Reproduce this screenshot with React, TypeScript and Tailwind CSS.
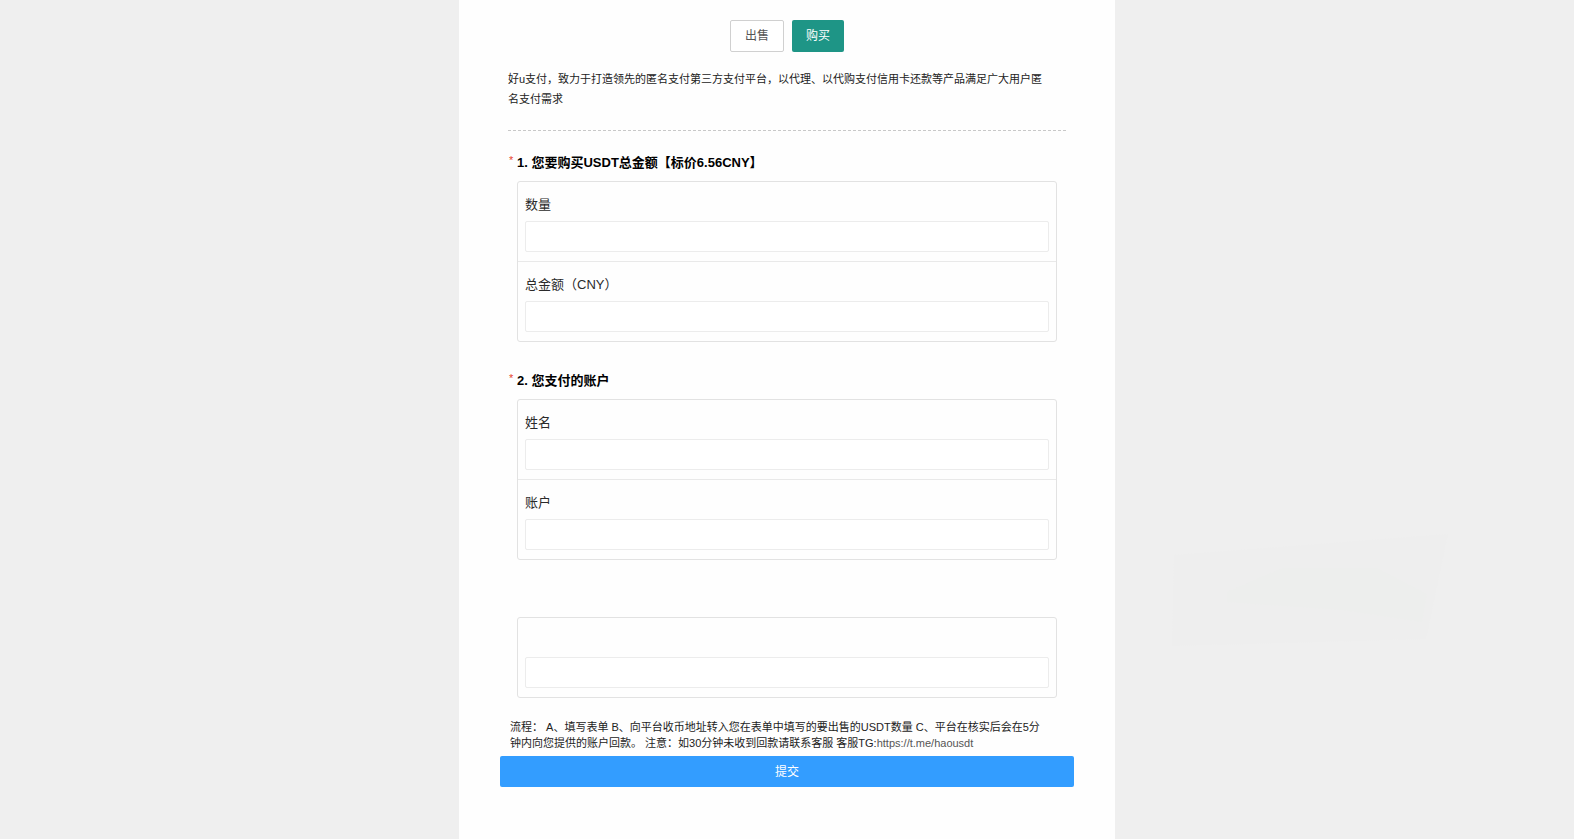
import { clsx } from 'clsx'

interface FieldType {
  id: string
  label?: string
}

interface SectionType {
  id: string
  title?: string
  fields: FieldType[]
}

const sections: SectionType[] = [
  {
    id: 'amount',
    title: '1. 您要购买USDT总金额【标价6.56CNY】',
    fields: [
      { id: 'quantity', label: '数量' },
      { id: 'total', label: '总金额（CNY）' },
    ],
  },
  {
    id: 'account',
    title: '2. 您支付的账户',
    fields: [
      { id: 'name', label: '姓名' },
      { id: 'account-no', label: '账户' },
    ],
  },
  { id: 'extra', fields: [{ id: 'remark' }] },
]

function Field({ field, first }: { field: FieldType; first: boolean }) {
  return (
    <div
      className={clsx(
        'flex flex-col px-[7px] pt-2 pb-[9px]',
        !first && 'border-t border-[#e9e9e9]'
      )}
    >
      <label htmlFor={field.id} className="h-[31px] text-[13px] leading-[30px] text-[#2a2a2a]">
        {field.label}
      </label>
      <input
        id={field.id}
        name={field.id}
        type="text"
        aria-label={field.label ?? '备注'}
        className="h-[31px] w-full rounded-xs border border-[#ececec] bg-white px-2 text-[13px] outline-none focus:border-[#339dff]"
      />
    </div>
  )
}

function Section({ section }: { section: SectionType }) {
  return (
    <section>
      <h2 className="flex h-5 text-[13px] leading-[22px] font-bold text-black">
        {section.title && (
          <>
            <span className="w-[9px] shrink-0 pl-px text-[11px] leading-4 font-normal text-[#e8432e]">
              *
            </span>
            {section.title}
          </>
        )}
      </h2>
      <div className="mx-[9px] mt-[9px] rounded-[3px] border border-[#e2e2e2]">
        {section.fields.map((field, i) => (
          <Field key={field.id} field={field} first={i === 0} />
        ))}
      </div>
    </section>
  )
}

// faint banner shape sitting on the page background
function Backdrop() {
  return (
    <svg
      aria-hidden="true"
      viewBox="0 0 276 112"
      className="pointer-events-none absolute top-[534px] left-[calc(50%+385px)] h-28 w-[276px]"
    >
      <path d="M2 21 L276 0 L254 105 L0 112 Z" fill="#eeeeee" />
      <path d="M55 58 L110 34 L205 34 L255 60 L250 88 L170 76 L55 68 Z" fill="#edeeed" />
    </svg>
  )
}

export default function App() {
  return (
    <div className="relative min-h-screen overflow-x-hidden bg-[#efefef] font-['Liberation_Sans','Noto_Sans_CJK_SC',sans-serif]">
      <Backdrop />
      <main className="relative mx-auto min-h-screen w-full max-w-[656px] bg-[#fefefe] px-[41px] pt-5 pb-10">
        <div className="flex justify-center gap-2">
          <button
            type="button"
            className="h-8 w-[54px] rounded-xs border border-[#d0d0d0] bg-white text-[12px] text-[#555]"
          >
            出售
          </button>
          <button
            type="button"
            className="h-8 w-[52px] rounded-xs bg-[#1e9586] text-[12px] text-white"
          >
            购买
          </button>
        </div>

        <form onSubmit={(e) => e.preventDefault()}>
          <div className="px-2">
            <p className="mt-[17px] border-b border-dashed border-[#c8c8c8] pb-[21px] text-[11px] leading-5 text-[#222]">
              好u支付，致力于打造领先的匿名支付第三方支付平台，以代理、以代购支付信用卡还款等产品满足广大用户匿
              <br />
              名支付需求
            </p>
            <div className="mt-[21px] flex flex-col gap-7">
              {sections.map((section) => (
                <Section key={section.id} section={section} />
              ))}
            </div>
            <p className="mt-[21px] mb-[5px] px-0.5 text-[11px] leading-4 text-[#222]">
              流程： A、填写表单 B、向平台收币地址转入您在表单中填写的要出售的USDT数量 C、平台在核实后会在5分
              <br />
              钟内向您提供的账户回款。 注意：如30分钟未收到回款请联系客服 客服TG:
              <a href="https://t.me/haousdt" className="text-[#555]">
                https://t.me/haousdt
              </a>
            </p>
          </div>
          <button
            type="submit"
            className="h-[31px] w-full rounded-xs bg-[#339dff] text-[12px] text-white"
          >
            提交
          </button>
        </form>
      </main>
    </div>
  )
}
